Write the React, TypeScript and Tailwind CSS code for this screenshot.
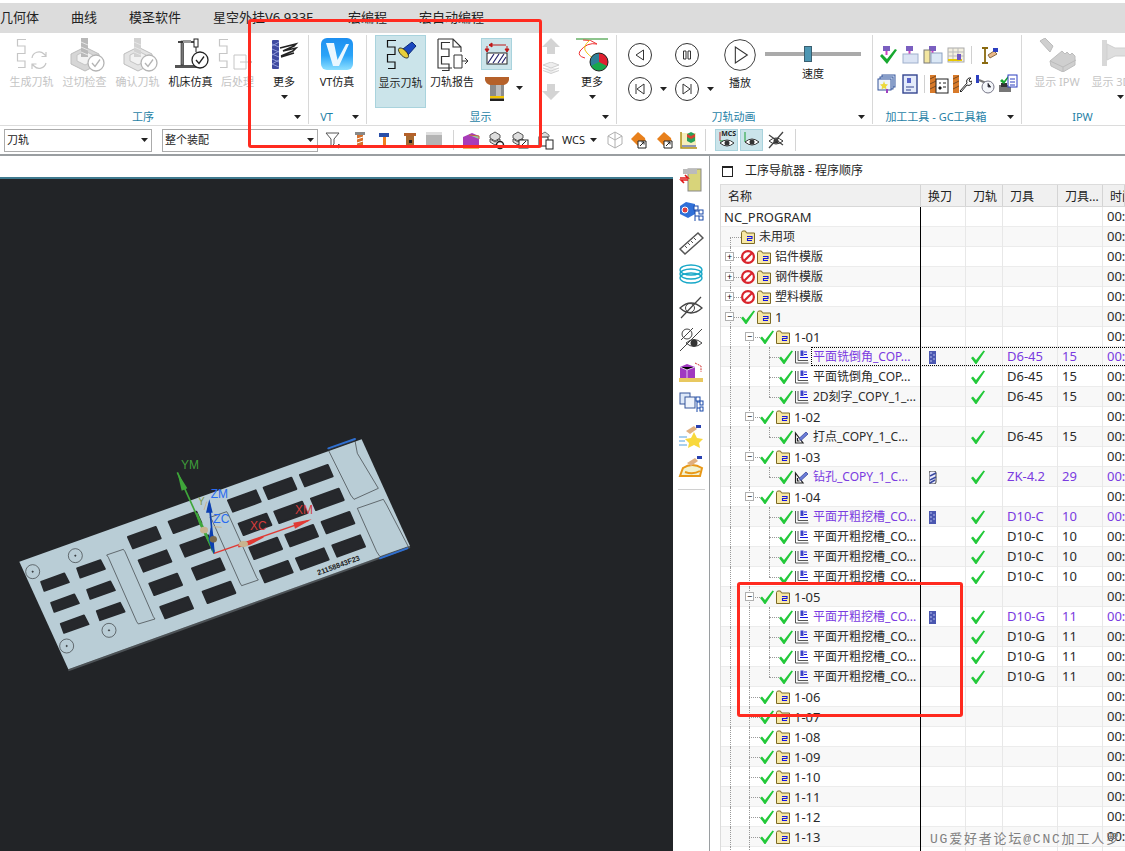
import React from 'react'

const Caret = ({ className = '' }: { className?: string }) => (
  <svg width="7" height="4" viewBox="0 0 7 4" className={className}>
    <polygon points="0,0 7,0 3.5,4" fill="#222" />
  </svg>
)

const Zig = ({ c = '#222', x = 0, y = 0 }: { c?: string; x?: number; y?: number }) => (
  <path
    transform={`translate(${x} ${y})`}
    d="M9 .5H.5V7H8V14.5H.5V22H8V28.5H1"
    fill="none"
    stroke={c}
    strokeWidth="1.2"
  />
)

const CheckBadge = ({ cx, cy, r = 8, c = '#222', bg = '#fff' }: { cx: number; cy: number; r?: number; c?: string; bg?: string }) => (
  <g>
    <circle cx={cx} cy={cy} r={r} fill={bg} stroke={c} strokeWidth="1.3" />
    <path d={`M${cx - 4} ${cy} l3 3.5 l5 -7`} fill="none" stroke={c} strokeWidth="1.3" />
  </g>
)

const Box = ({ children, w = 44, h = 34 }: { children: React.ReactNode; w?: number; h?: number }) => (
  <svg width={w} height={h} viewBox={`0 0 ${w} ${h}`} className="block">
    {children}
  </svg>
)

const GenIcon = () => (
  <Box>
    <Zig c="#c6c6c6" x={7} y={1} />
    <path d="M22 20a7 7 0 0 1 12-4l2 2M36 14v4.500h-4.500M36 25a7 7 0 0 1-12 3l-2-2M22 31v-5h4.500" fill="none" stroke="#c6c6c6" strokeWidth="1.2" />
  </Box>
)

const BlockIcon = ({ light }: { light?: boolean }) => (
  <Box>
    <path d="M8 16 22 9l14 7v10l-14 7-14-7z" fill={light ? '#e4e4e4' : '#d6d6d6'} stroke="#bdbdbd" />
    <path d="M14 17 22 13l8 4v6l-8 4-8-4z" fill="#f2f2f2" stroke="#c4c4c4" />
    <rect x="18" y="0" width="7" height="19" fill={light ? '#d2d2d2' : '#b9b9b9'} />
    <path d="M18 4l7 3M18 9l7 3M18 14l7 3" stroke="#e6e6e6" />
    <CheckBadge cx={33} cy={25} c="#b4b4b4" />
  </Box>
)

const MachineIcon = () => (
  <Box>
    <rect x="6" y="27" width="24" height="3" fill="#555" />
    <rect x="12" y="3" width="2.500" height="24" fill="#777" stroke="#222" strokeWidth=".6" />
    <path d="M9 4h20" stroke="#333" strokeWidth="1.800" />
    <rect x="14" y="2" width="8" height="3" fill="#999" />
    <rect x="25" y="1" width="4" height="8" fill="#fff" stroke="#222" />
    <path d="M27 9v5" stroke="#222" />
    <CheckBadge cx={31} cy={22} />
  </Box>
)

const PostIcon = () => (
  <Box>
    <Zig c="#c6c6c6" x={3} y={1} />
    <path d="M18 17h12v14H18z" fill="none" stroke="#c6c6c6" />
    <path d="M24 24h12m-3-3 3 3-3 3" fill="none" stroke="#c6c6c6" />
  </Box>
)

const MoreIcon = () => (
  <Box w={30}>
    <rect x="3" y="2" width="7" height="29" rx="1" fill="#3f4aa0" />
    <path d="M3 6l7 3M3 11l7 3M3 16l7 3M3 21l7 3M3 26l7 3M10 4 3 8M10 13 3 17M10 22 3 26" stroke="#8f9ad8" strokeWidth="1" />
    <path d="M11 10l16-4-2 2-11 5 13-3-3 3-12 5M12 19l13-4" fill="none" stroke="#222" strokeWidth="1.500" />
  </Box>
)

const VtLogo = () => (
  <Box w={32} h={32}>
    <defs>
      <linearGradient id="vt" x1="0" y1="0" x2="0" y2="1">
        <stop offset="0" stopColor="#1d8ff0" />
        <stop offset=".55" stopColor="#2aa4f8" />
        <stop offset="1" stopColor="#8ee0ff" />
      </linearGradient>
    </defs>
    <rect width="32" height="32" rx="6" fill="url(#vt)" />
    <path d="M5 5h8l3.500 17L25 6h3L18 28h-6z" fill="#eaf7ff" />
  </Box>
)

const ShowPathIcon = () => (
  <Box>
    <Zig c="#111" x={8} y={1} />
    <path d="M24 10l9-7 4 4-8 9z" fill="#1a48c0" stroke="#0c2a78" />
    <ellipse cx="24.500" cy="14" rx="3" ry="6.500" transform="rotate(-45 24.500 14)" fill="#e8cf3c" stroke="#222" strokeWidth=".8" />
  </Box>
)

const ReportIcon = () => (
  <Box>
    <path d="M8 1h15l8 8v5M8 1v29h14M23 1v8h8" fill="none" stroke="#333" strokeWidth="1.100" />
    <Zig c="#333" x={11} y={4} />
    <path d="M24 17h8v13h-8zM32 23h6m-3-3 3 3-3 3" fill="none" stroke="#333" />
  </Box>
)

const HatchBtn = () => (
  <div className="w-[31px] h-[32px] bg-[#cbe4ea] border border-[#a9d3dd] flex items-center justify-center">
    <svg width="26" height="26" viewBox="0 0 26 26">
      <rect x="3" y="12" width="20" height="11" fill="#fff" stroke="#222" />
      <path d="M4 22 10 13M9 22 15 13M14 22 20 13M18 22 22 16" stroke="#22226a" strokeWidth="1.200" />
      <path d="M5 4h17M5 4l3-2v4z" stroke="#c01818" fill="#c01818" />
      <path d="M3 5v5M23 5v5M1 8l2 3 2-3zM21 8l2 3 2-3z" stroke="#c01818" fill="#c01818" />
    </svg>
  </div>
)

const ToolIcon = () => (
  <svg width="24" height="24" viewBox="0 0 24 24" className="block">
    <path d="M0 0h24v3q-1 4-5 5H5Q1 7 0 3z" fill="#b5612a" />
    <rect x="5" y="8" width="14" height="11" fill="#8c8c8c" />
    <rect x="11" y="8" width="5" height="11" fill="#bdbdbd" />
    <rect x="5" y="19" width="14" height="2.500" fill="#f2c400" />
    <rect x="5" y="21.500" width="14" height="2.500" fill="#222" />
  </svg>
)

const ArrowBig = ({ down }: { down?: boolean }) => (
  <svg width="18" height="16" viewBox="0 0 18 16" className={down ? 'block rotate-180' : 'block'}>
    <polygon points="9,0 18,9 13,9 13,16 5,16 5,9 0,9" fill="#d4d4d4" />
  </svg>
)

const LayersIcon = () => (
  <svg width="18" height="14" viewBox="0 0 18 14" className="block">
    <path d="M9 0l8 3-8 3-8-3zM1 6l8 3 8-3M1 8.500l8 3 8-3" fill="#eee" stroke="#d0d0d0" />
  </svg>
)

const ColorMoreIcon = () => (
  <Box w={34}>
    <path d="M1 1h32" stroke="#1b8a1b" strokeWidth="1" />
    <path d="M8 2q8-1 14 4Q12 4 5 13q-3 5 5 7" fill="none" stroke="#e33" strokeWidth="1" />
    <path d="M15 2q-9 7-3 13t8 6" fill="none" stroke="#f1c515" strokeWidth="1" />
    <circle cx="24" cy="24" r="9" fill="#18a84a" />
    <path d="M24 24V15a9 9 0 0 1 8 13z" fill="#e02030" />
    <path d="M24 24V15a9 9 0 0 0-8 13z" fill="#2f7f96" />
    <circle cx="24" cy="24" r="9" fill="none" stroke="#222" />
  </Box>
)

const Circle = ({ kind, big }: { kind: string; big?: boolean }) => (
  <svg width={big ? 32 : 24} height={big ? 32 : 24} viewBox="0 0 24 24" className="block">
    <circle cx="12" cy="12" r="11.500" fill="#fff" stroke="#333" strokeWidth={big ? 0.7 : 1} />
    {kind === 'back' && <polygon points="15.500,7 15.500,17 8,12" fill="none" stroke="#333" />}
    {kind === 'pause' && <path d="M8.500 8h2.500v8H8.500zM13 8h2.500v8H13z" fill="none" stroke="#333" />}
    {kind === 'play' && <polygon points="8.500,6 8.500,18 17.500,12" fill="none" stroke="#333" strokeWidth=".8" />}
    {kind === 'start' && <path d="M8 7v10M16 7v10L9 12z" fill="none" stroke="#333" />}
    {kind === 'end' && <path d="M16 7v10M8 7v10l7-5z" fill="none" stroke="#333" />}
  </svg>
)

const Mini = ({ children, s = 20 }: { children: React.ReactNode; s?: number }) => (
  <svg width={s} height={s} viewBox="0 0 20 20" className="block shrink-0">
    {children}
  </svg>
)

const Cutter = () => (
  <>
    <rect x="6" y="1" width="7" height="5" fill="#7a5fc0" />
    <path d="M9.500 6v4" stroke="#d040c0" strokeWidth="2" />
  </>
)

const gcIcons: Record<string, React.ReactNode> = {
  check: (
    <>
      <Cutter />
      <path d="M3 11l2-2 5 5 8-10 2 1-10 14z" fill="#18a830" />
    </>
  ),
  plate: (
    <>
      <Cutter />
      <rect x="3" y="9" width="15" height="9" fill="#dbe4f4" stroke="#9fb0cc" />
    </>
  ),
  list: (
    <>
      <Cutter />
      <rect x="1" y="5" width="6" height="13" fill="#f3e6a0" stroke="#777" />
      <rect x="8" y="8" width="11" height="10" fill="#dbe8f6" stroke="#8ea2c0" />
    </>
  ),
  grid: (
    <>
      <rect x="2" y="3" width="16" height="14" fill="#f4f0e0" stroke="#aaa" />
      <path d="M2 7h16M2 11h16M7 3v14M12 3v14" stroke="#bbb" />
      <path d="M2 15h14" stroke="#e8c800" strokeWidth="2" />
      <path d="M13 9v6" stroke="#7058c0" strokeWidth="4" />
    </>
  ),
  hand: (
    <>
      <path d="M3 3h6M3 18h6M6 3v15" stroke="#8a6a10" strokeWidth="1.800" />
      <path d="M9 10l6-4 3 3-7 4z" fill="#e8b88a" stroke="#8a6a40" />
      <rect x="14" y="3" width="5" height="4" fill="#2c3fc0" />
    </>
  ),
  star: (
    <>
      <rect x="5" y="1" width="13" height="12" fill="#dce8f8" stroke="#34559a" />
      <rect x="3" y="3" width="13" height="12" fill="#dce8f8" stroke="#34559a" />
      <rect x="1" y="5" width="13" height="11" fill="#eef3fb" stroke="#34559a" />
      <path d="M7 7l1 3 3 .500-2 2 .500 3L7 14l-2.500 1.500.500-3-2-2 3-.500z" fill="#ecd83c" />
      <path d="M10 15v4" stroke="#a040c0" strokeWidth="2" />
    </>
  ),
  doc: (
    <>
      <rect x="3" y="1" width="14" height="18" fill="#e4ebfa" stroke="#34458f" strokeWidth="1.400" />
      <path d="M7 4h4v5H7z" fill="#5a64c8" />
      <path d="M6 13h8M6 16h5" stroke="#34458f" />
    </>
  ),
  drillDoc: (
    <>
      <rect x="1" y="1" width="6" height="18" fill="#d87a2a" />
      <path d="M1 5l6-3M1 10l6-3M1 15l6-3" stroke="#7a4a20" />
      <rect x="7" y="5" width="12" height="14" fill="#fff" stroke="#222" />
      <path d="M10 9h2M14 9h3M10 13h2v2h-2zM14 13h3" stroke="#222" />
    </>
  ),
  drillWrench: (
    <>
      <rect x="1" y="1" width="6" height="18" fill="#d87a2a" />
      <path d="M1 5l6-3M1 10l6-3M1 15l6-3" stroke="#7a4a20" />
      <path d="M8 17l7-8a3.500 3.500 0 0 1 4-5l-2 2 1 2 2-1a3.500 3.500 0 0 1-5 4l-6 7z" fill="#fff" stroke="#222" />
    </>
  ),
  clock: (
    <>
      <rect x="1" y="1" width="3" height="8" fill="#2c3fc0" />
      <path d="M4 6l7 3" stroke="#777" strokeWidth="2" />
      <circle cx="13" cy="13" r="6" fill="#f4f6fa" stroke="#778" />
      <path d="M13 9v4h3" stroke="#556" />
    </>
  ),
  report: (
    <>
      <rect x="1" y="11" width="12" height="7" fill="#777" />
      <rect x="3" y="9" width="6" height="4" fill="#333" />
      <path d="M2 7l2-2 2 2 4-5 1 1-5 7z" fill="#18a830" />
      <rect x="10" y="1" width="9" height="12" fill="#fff" stroke="#2c3fc0" />
      <path d="M12 5h5M12 8h5M12 11h5" stroke="#2c3fc0" />
    </>
  ),
}

const IpwIcon = () => (
  <Box>
    <path d="M5 3l5-3 8 8-3 6z" fill="#cfcfcf" stroke="#bbb" />
    <path d="M15 23 27 13l3 3 2-2 3 3 2-2 3 3v9L28 34 16 28z" fill="#cfcfcf" stroke="#bdbdbd" />
    <path d="M15 23l13 6 13-7M28 29v5" stroke="#bbb" fill="none" />
  </Box>
)

const ThreeDIcon = () => (
  <Box w={30}>
    <path d="M6 2h5v26H6z" fill="#d8d8d8" />
    <path d="M11 6l8 4h11v8H19l-8 4z" fill="#dedede" stroke="#cfcfcf" />
  </Box>
)

const RibbonBtn = ({
  w,
  icon,
  label,
  off,
  caret,
  on,
  caretCls = '',
}: {
  w: string
  icon: React.ReactNode
  label: string
  off?: boolean
  caret?: boolean
  on?: boolean
  caretCls?: string
}) => (
  <div className={`${w} h-[73px] shrink-0 flex flex-col items-center pt-[3px] ${on ? 'bg-[#cbe4ea] border border-[#a9d3dd]' : ''}`}>
    <div className="h-[34px] flex justify-center">{icon}</div>
    <div className={`mt-[3px] leading-[14px] text-[11px] whitespace-nowrap ${off ? 'text-[#c4c4c4]' : 'text-[#222]'}`}>{label}</div>
    {caret && <Caret className={`mt-[6px] ${caretCls}`} />}
  </div>
)

const RibbonGroup = ({
  w,
  label,
  caret = true,
  children,
  body = '',
}: {
  w: string
  label: string
  caret?: boolean
  children: React.ReactNode
  body?: string
}) => (
  <div className={`${w} shrink-0 mt-[2px] h-[89px] flex flex-col border-r border-[#d8d8d8]`}>
    <div className={`h-[73px] flex ${body}`}>{children}</div>
    <div className="h-[14px] mt-[2px] flex items-center">
      <div className="flex-1 text-center text-[11px] leading-[14px] text-[#1f7fa6] whitespace-nowrap">{label}</div>
      {caret && (
        <div className="w-[22px] flex justify-center">
          <Caret />
        </div>
      )}
    </div>
  </div>
)

const Combo = ({ w, label }: { w: string; label: string }) => (
  <div className={`${w} h-[23px] shrink-0 border border-[#ababab] bg-white flex items-center justify-between pl-[2px] pr-[3px] text-[11px] text-[#222]`}>
    <span>{label}</span>
    <Caret />
  </div>
)

const barIcons: Record<string, React.ReactNode> = {
  funnel: <path d="M2 3h13l-5 6v5l-3 3V9zM12 17l3-3 1 3-2 1" fill="#fff" stroke="#555" />,
  mill: (
    <>
      <rect x="5" y="2" width="10" height="3" fill="#888" />
      <rect x="7" y="5" width="6" height="13" fill="#d8702a" />
      <path d="M7 9l6-2M7 13l6-2" stroke="#fff" />
    </>
  ),
  end: (
    <>
      <rect x="5" y="3" width="10" height="4" fill="#2a4fa8" />
      <rect x="9" y="7" width="3" height="11" fill="#f08020" />
    </>
  ),
  holder: (
    <>
      <rect x="4" y="3" width="12" height="3" fill="#b5612a" />
      <rect x="6" y="6" width="8" height="12" fill="#a86a30" />
      <rect x="9" y="10" width="3" height="3" fill="#222" />
    </>
  ),
  win: (
    <>
      <rect x="2" y="2" width="16" height="16" fill="#b4b4b4" />
      <rect x="2" y="2" width="16" height="3" fill="#dedede" />
    </>
  ),
  cube: (
    <>
      <path d="M2 7l9-4 7 3v10l-8 3-8-3z" fill="#a83cb8" />
      <path d="M8 5l10 1v3" fill="#9ad0a0" stroke="#c06040" />
      <path d="M2 16h16v3H2z" fill="#e8b860" />
    </>
  ),
  gears: (
    <>
      <path d="M4 5l5-3 5 3v3l-5 3-5-3zM4 9l5 3 5-3v3l-5 3-5-3z" fill="#ddd" stroke="#555" />
      <circle cx="14" cy="15" r="3.500" fill="#fff" stroke="#222" strokeWidth="1.500" />
    </>
  ),
  gearsBox: (
    <>
      <path d="M3 5l5-3 5 3v3l-5 3-5-3zM3 9l5 3 5-3v3l-5 3-5-3z" fill="#ddd" stroke="#555" />
      <rect x="9" y="10" width="9" height="8" fill="#fff" stroke="#222" />
      <path d="M11 16l5-5" stroke="#222" />
    </>
  ),
  copy: (
    <>
      <path d="M4 5l5-3 4 3v2" fill="#ddd" stroke="#777" />
      <rect x="3" y="7" width="9" height="9" fill="#fff" stroke="#222" />
      <rect x="10" y="10" width="7" height="9" fill="#fff" stroke="#222" />
    </>
  ),
  wire: (
    <path d="M10 2l7 4v8l-7 4-7-4V6zM3 6l7 4 7-4M10 10v8M10 2v8" fill="none" stroke="#b0b0b0" />
  ),
  orange: (
    <>
      <path d="M2 9 9 2l7 6 1 6-6 4z" fill="#e8801c" />
      <path d="M9 18V11h8v7z" fill="#fff" stroke="#222" />
      <path d="M11 16l4-4m-2.500 0H15v2.500" stroke="#222" fill="none" />
    </>
  ),
  chart: (
    <>
      <path d="M2 2v16h16" fill="#f6eebc" stroke="#b09018" strokeWidth="1.500" />
      <rect x="3" y="3" width="14" height="13" fill="#f6eebc" />
      <path d="M8 4l4-2 4 2v7l-4 2-4-2z" fill="#28a058" />
      <path d="M8 4l4 2 4-2v3l-4 2-4-2z" fill="#d84030" />
      <path d="M3 16h14" stroke="#2840b0" />
    </>
  ),
  mcs: (
    <>
      <path d="M3 2v9" stroke="#c03030" />
      <path d="M3 11h4" stroke="#18a030" />
      <path d="M3 13q7-6 14 0-7 6-14 0z" fill="#fff" stroke="#333" />
      <circle cx="10" cy="13" r="2.500" fill="#333" />
    </>
  ),
  eye: (
    <>
      <path d="M3 2v10" stroke="#18a030" />
      <path d="M3 12l4 2" stroke="#c03030" />
      <path d="M3 12q7-6 14 0-7 6-14 0z" fill="#fff" stroke="#333" />
      <circle cx="10" cy="12" r="2.500" fill="#333" />
    </>
  ),
  hide: (
    <>
      <path d="M3 11q7-6 14 0-7 6-14 0z" fill="#fff" stroke="#333" />
      <circle cx="10" cy="11" r="2.500" fill="#333" />
      <path d="M3 18 17 2M3 5l14 10" stroke="#444" strokeWidth="1.300" />
    </>
  ),
}

const BarIcon = ({ name, cls }: { name: string; cls: string }) => (
  <div className={`${cls} w-[20px] h-[20px] shrink-0`}>
    <Mini>{barIcons[name]}</Mini>
  </div>
)

const sideIcons: React.ReactNode[] = [
  <>
    <rect x="10" y="3" width="13" height="22" fill="#d8d47a" stroke="#888" />
    <rect x="5" y="3" width="14" height="5" fill="#bbb" />
    <path d="M2 12h8l-3-3M10 14H3l3 3" fill="none" stroke="#e01818" strokeWidth="1.600" />
  </>,
  <>
    <path d="M2 8l6-4 9 2v10l-7 4-8-4z" fill="#3070d8" />
    <circle cx="7" cy="12" r="3" fill="#e04040" stroke="#fff" />
    <path d="M17 9v14M17 13h4M17 18h4" stroke="#1848a8" />
    <rect x="16" y="8" width="4" height="4" fill="#fff" stroke="#1848a8" />
    <rect x="21" y="12" width="4" height="4" fill="#fff" stroke="#1848a8" />
    <rect x="21" y="18" width="4" height="4" fill="#fff" stroke="#1848a8" />
  </>,
  <>
    <path d="M2 19 20 3l5 5L7 24z" fill="#fff" stroke="#555" strokeWidth="1.500" />
    <path d="M7 16l2 2M10 13l2 2M13 11l2 2M16 8l2 2" stroke="#555" />
  </>,
  <>
    <ellipse cx="13" cy="8" rx="11" ry="5" fill="none" stroke="#18a8c8" strokeWidth="1.300" />
    <ellipse cx="13" cy="12" rx="11" ry="5" fill="none" stroke="#18a8c8" strokeWidth="1.300" />
    <ellipse cx="13" cy="16" rx="11" ry="5" fill="none" stroke="#18a8c8" strokeWidth="1.300" />
  </>,
  <>
    <path d="M2 14q11-10 22 0-11 10-22 0z" fill="none" stroke="#444" strokeWidth="1.300" />
    <circle cx="12" cy="14" r="4.500" fill="none" stroke="#444" />
    <path d="M3 24 23 3" stroke="#444" strokeWidth="1.200" />
  </>,
  <>
    <circle cx="9" cy="8" r="5" fill="none" stroke="#444" />
    <path d="M3 14 15 2" stroke="#444" />
    <path d="M8 17q8-7 16 0-8 7-16 0z" fill="#fff" stroke="#444" />
    <circle cx="16" cy="17" r="3.500" fill="#333" />
    <path d="M2 25 24 3" stroke="#444" />
  </>,
  <>
    <path d="M2 9l7-3 8 3v11H2z" fill="#a038c0" />
    <path d="M2 9l7 3 8-3M9 12v8" stroke="#e4c4f0" />
    <path d="M17 5l6 3v6" fill="none" stroke="#d03030" strokeDasharray="2 1" />
    <rect x="1" y="20" width="24" height="4" fill="#e8c860" />
  </>,
  <>
    <rect x="2" y="3" width="10" height="11" fill="#dde8f8" stroke="#34559a" />
    <rect x="7" y="7" width="10" height="11" fill="#eef3fb" stroke="#34559a" />
    <path d="M19 8v14M19 12h3M19 18h3" stroke="#1848a8" />
    <rect x="18" y="7" width="4" height="4" fill="#fff" stroke="#1848a8" />
    <rect x="22" y="11" width="3" height="4" fill="#fff" stroke="#1848a8" />
    <rect x="22" y="17" width="3" height="4" fill="#fff" stroke="#1848a8" />
  </>,
  <>
    <path d="M16 10l3 6 6 1-4 4 1 5-6-3-6 3 1-5-4-4 6-1z" fill="#f8d83c" />
    <path d="M8 9l8-5 3 3-7 5z" fill="#e0b080" />
    <path d="M18 3h5v3h-5z" fill="#2840b0" />
    <path d="M1 15h8M1 19h6M1 23h8" stroke="#50a0e0" />
  </>,
  <>
    <path d="M2 22 22 22 24 14Q14 8 5 14z" fill="#f2f2d0" stroke="#e89818" strokeWidth="2" />
    <path d="M7 18q8 3 15-1" fill="none" stroke="#e89818" strokeWidth="2" />
    <path d="M9 9l8-5 3 3-7 5z" fill="#e0b080" />
    <path d="M19 2h5v3h-5z" fill="#2840b0" />
  </>,
]

const Check = () => (
  <svg width="14" height="14" viewBox="0 0 14 14" className="block shrink-0">
    <polygon points="0,8 2,6.500 5,10 12.500,.5 14,1.200 5.500,14 4.500,14" fill="#23c93a" />
  </svg>
)

const Stop = () => (
  <svg width="14" height="14" viewBox="0 0 14 14" className="block shrink-0">
    <circle cx="7" cy="7" r="5.900" fill="#fff" stroke="#d9242c" strokeWidth="2.200" />
    <path d="M3 11 11 3" stroke="#d9242c" strokeWidth="2.200" />
  </svg>
)

const Folder = () => (
  <svg width="14" height="14" viewBox="0 0 14 14" className="block shrink-0">
    <path d="M.5 13.500V2.500l1-1.500h3l1 2h8v10.500z" fill="#f7e8a6" stroke="#7d6a24" />
    <path d="M6 6.500h5v2H6.500v2H11" fill="none" stroke="#1414e0" strokeWidth="1.100" />
  </svg>
)

const OpIcon = () => (
  <svg width="15" height="14" viewBox="0 0 15 14" className="block shrink-0">
    <path d="M1.500 1v12h13M4 1v9.500h10" fill="none" stroke="#555" />
    <rect x="6.500" y=".5" width="3" height="5.500" fill="#3c42c8" />
    <path d="M10 2h3M10 4.500h3M6 7.500h8" stroke="#1616e0" />
  </svg>
)

const PointIcon = () => (
  <svg width="15" height="14" viewBox="0 0 15 14" className="block shrink-0">
    <path d="M1.500 3 9 13H1.500zM3.500 8v3h2" fill="none" stroke="#222" strokeWidth="1.200" />
    <path d="M5 8.500 12 2l2 2-7 6.500z" fill="#6a7cd8" stroke="#2c3a90" strokeWidth=".7" />
  </svg>
)

const Tool = ({ drill }: { drill?: boolean }) => (
  <svg width="8" height="13" viewBox="0 0 8 13" className="block">
    <rect x="0" y="0" width="7" height="13" rx={drill ? 2 : 0} fill={drill ? '#eef' : '#4b57b0'} stroke={drill ? '#444' : 'none'} />
    {drill ? (
      <path d="M1 5l6-3M1 9l6-3M1 12l5-3" stroke="#3a4aa0" strokeWidth="1.500" />
    ) : (
      <path d="M1 2h2M4 4h2M1 6h2M4 8h2M1 10h2" stroke="#b5bcec" />
    )}
  </svg>
)

type Row = {
  name: string
  lv: 'root' | 'unused' | 'top' | 'group' | 'op' | 'blank'
  mark?: 'stop' | 'check'
  box?: '+' | '-'
  point?: boolean
  tool?: string
  num?: string
  hot?: boolean
  icon?: 'mill' | 'drill'
  last?: boolean
  focus?: boolean
}

const op = (name: string, tool: string, num: string, extra: Partial<Row> = {}): Row => ({ name, tool, num, lv: 'op', mark: 'check', ...extra })
const grp = (name: string, box?: '+' | '-'): Row => ({ name, lv: 'group', mark: 'check', box })
const mill = '平面开粗挖槽_CO...'

const rows: Row[] = [
  { name: 'NC_PROGRAM', lv: 'root' },
  { name: '未用项', lv: 'unused' },
  { name: '铝件模版', lv: 'top', mark: 'stop', box: '+' },
  { name: '钢件模版', lv: 'top', mark: 'stop', box: '+' },
  { name: '塑料模版', lv: 'top', mark: 'stop', box: '+' },
  { name: '1', lv: 'top', mark: 'check', box: '-' },
  grp('1-01', '-'),
  op('平面铣倒角_COP...', 'D6-45', '15', { hot: true, icon: 'mill', focus: true }),
  op('平面铣倒角_COP...', 'D6-45', '15'),
  op('2D刻字_COPY_1_...', 'D6-45', '15', { last: true }),
  grp('1-02', '-'),
  op('打点_COPY_1_C...', 'D6-45', '15', { point: true, last: true }),
  grp('1-03', '-'),
  op('钻孔_COPY_1_C...', 'ZK-4.2', '29', { point: true, hot: true, icon: 'drill', last: true }),
  grp('1-04', '-'),
  op(mill, 'D10-C', '10', { hot: true, icon: 'mill' }),
  op(mill, 'D10-C', '10'),
  op(mill, 'D10-C', '10'),
  op(mill, 'D10-C', '10', { last: true }),
  grp('1-05', '-'),
  op(mill, 'D10-G', '11', { hot: true, icon: 'mill' }),
  op(mill, 'D10-G', '11'),
  op(mill, 'D10-G', '11'),
  op(mill, 'D10-G', '11', { last: true }),
  ...['1-06', '1-07', '1-08', '1-09', '1-10', '1-11', '1-12', '1-13'].map((n) => grp(n)),
  { name: '', lv: 'blank' },
]

const dot = 'absolute border-[#9a9a9a] border-dotted'

const NavRow = ({ row, i }: { row: Row; i: number }) => {
  const txt = row.hot ? 'text-[#7a3be0]' : 'text-[#2a2a2a]'
  const pad = { root: 'pl-[3px]', unused: 'pl-[20px]', top: 'pl-[20px]', group: 'pl-[39px]', op: 'pl-[58px]', blank: '' }[row.lv]
  const cell = 'border-r border-[#e8e8e8] h-full flex items-center pl-[4px]'
  const latin = /^[\x00-\x7f]*$/.test(row.name)
  return (
    <div className={`relative h-[20px] grid grid-cols-[200px_45px_37px_55px_45px_1fr] border-b border-[#ececec] ${i % 2 ? 'bg-[#f8f8f8]' : 'bg-white'}`}>
      <div className={`relative h-full border-r border-black flex items-center ${pad}`}>
        {i > 0 && <span className={`${dot} border-l left-[9px] bottom-0 ${i === 1 ? 'h-[10px]' : 'top-0'}`} />}
        {i > 6 && <span className={`${dot} border-l left-[28px] top-0 bottom-0`} />}
        {i === 6 && <span className={`${dot} border-l left-[28px] h-[10px] bottom-0`} />}
        {row.lv === 'op' && <span className={`${dot} border-l left-[48px] top-0 ${row.last ? 'h-[10px]' : 'bottom-0'}`} />}
        {(row.lv === 'top' || row.lv === 'unused') && <span className={`${dot} border-t left-[9px] w-[11px] top-[10px]`} />}
        {row.lv === 'group' && <span className={`${dot} border-t left-[28px] w-[11px] top-[10px]`} />}
        {row.lv === 'op' && <span className={`${dot} border-t left-[48px] w-[10px] top-[10px]`} />}
        {row.box && (
          <span className={`absolute ${row.lv === 'top' ? 'left-[4px]' : 'left-[24px]'} top-[5px] w-[9px] h-[9px] bg-white border border-[#b0b0b0] flex items-center justify-center text-[9px] leading-none text-black`}>
            {row.box === '+' ? '+' : '−'}
          </span>
        )}
        <div className="relative flex items-center">
          {row.mark === 'stop' && <Stop />}
          {row.mark === 'check' && <Check />}
          {row.lv === 'op' ? (
            <span className="ml-[1px]">{row.point ? <PointIcon /> : <OpIcon />}</span>
          ) : row.mark ? (
            <span className="ml-[2px]">
              <Folder />
            </span>
          ) : row.lv === 'unused' ? (
            <Folder />
          ) : null}
          <span className={`${row.lv === 'root' ? '' : 'ml-[4px]'} whitespace-nowrap ${latin ? 'text-[13px]' : 'text-[12px]'} leading-[20px] ${txt}`}>{row.name}</span>
        </div>
      </div>
      <div className="border-r border-[#e8e8e8] h-full flex items-center pl-[8px]">{row.icon && <Tool drill={row.icon === 'drill'} />}</div>
      <div className={`${cell} pl-[5px]`}>{row.tool && <Check />}</div>
      <div className={`${cell} text-[13px] ${txt}`}>{row.tool}</div>
      <div className={`${cell} text-[13px] ${txt}`}>{row.num}</div>
      <div className={`h-full flex items-center pl-[4px] text-[13px] whitespace-nowrap overflow-hidden ${txt}`}>{row.lv !== 'blank' && '00:00:00'}</div>
      {row.focus && <div className="absolute left-[90px] right-0 top-0 bottom-0 border-y border-l border-dotted border-black" />}
    </div>
  )
}

const Header = ({ t, cls }: { t: string; cls?: string }) => (
  <div className={`h-full flex items-center pl-[7px] pt-[2px] border-r border-[#d4d4d4] overflow-hidden whitespace-nowrap ${cls || ''}`}>{t}</div>
)

const pockets: [number, number][] = [
  [433, 353], [465, 423], [497, 493], [530, 563],
  [555, 307], [590, 378], [625, 447], [657, 517],
  [733, 243], [765, 313], [797, 385], [829, 455],
  [840, 205], [872, 277], [905, 347], [937, 417],
  [949, 167], [982, 238], [1014, 308], [1046, 378],
]
const smallPockets: [number, number][] = [
  [165, 487], [273, 447], [195, 550], [303, 511], [224, 613], [332, 575],
]
const holes: [number, number, number][] = [
  [98, 455, 21], [226, 407, 21], [327, 631, 21], [200, 678, 21],
]

const Viewport = () => (
  <svg viewBox="0 179 673 672" className="block w-full h-full">
    <g transform="translate(0 420) scale(.33333)">
      <path d="M205 751 1230 381" stroke="#4d5256" strokeWidth="6" fill="none" />
      <polygon points="58,425 1085,58 1230,378 205,748" fill="#b9cdd6" />
      {pockets.map(([x, y]) => (
        <polygon key={`${x}-${y}`} points={`${x - 49},${y - 2} ${x + 34},${y - 32} ${x + 49},${y + 2} ${x - 34},${y + 32}`} fill="#26282c" stroke="#26282c" strokeWidth="6" strokeLinejoin="round" />
      ))}
      {smallPockets.map(([x, y]) => (
        <polygon key={`${x}-${y}`} points={`${x - 42},${y - 2} ${x + 28},${y - 27} ${x + 42},${y} ${x - 32},${y + 26}`} fill="#26282c" stroke="#26282c" strokeWidth="5" strokeLinejoin="round" />
      ))}
      <g fill="none" stroke="#33373a" strokeWidth="2">
        <path d="M320 405 370 388 375 395 460 590 465 597 415 612 410 605 325 412z" />
        <path d="M630 292 680 275 685 283 770 473 775 480 725 497 720 489 636 300z" />
        <path d="M985 90 1065 62 1072 100 1135 205 1062 238 1052 225z" />
        <path d="M1072 265 1150 238 1160 255 1225 380 1140 410 1130 395z" />
        {holes.map(([x, y, r]) => (
          <g key={x}>
            <circle cx={x} cy={y} r={r} />
            <circle cx={x} cy={y} r="2" fill="#33373a" />
          </g>
        ))}
      </g>
      <path d="M985 85 1065 57" stroke="#2f6fd0" strokeWidth="6" fill="none" strokeLinecap="round" />
      <path d="M1140 415 1222 385" stroke="#2f6fd0" strokeWidth="6" fill="none" strokeLinecap="round" />
      <text x="955" y="466" fontSize="22" fill="#222" transform="rotate(-20 955 466)" fontFamily="Liberation Sans, sans-serif" fontWeight="bold">
        21158843F23
      </text>
      <path d="M642 400 532 157" stroke="#3fa63a" strokeWidth="5" />
      <polygon points="532,157 562,205 545,212" fill="#3fa63a" />
      <polygon points="590,280 642,395 600,310" fill="#3fa63a" stroke="#3fa63a" strokeWidth="6" />
      <path d="M642 400 628 250" stroke="#0b3fb0" strokeWidth="5" />
      <polygon points="628,238 638,278 618,278" fill="#0b3fb0" />
      <polygon points="632,322 644,358 636,395 626,358" fill="#0b3fb0" />
      <path d="M642 400 925 302" stroke="#e03a34" strokeWidth="4" />
      <polygon points="935,298 880,308 885,326" fill="#e03a34" />
      <polygon points="715,380 790,350 750,372" fill="#e03a34" stroke="#e03a34" strokeWidth="5" />
      <ellipse cx="612" cy="330" rx="12" ry="10" fill="#c9b48f" />
      <ellipse cx="640" cy="358" rx="11" ry="10" fill="#7a6a4c" />
      <ellipse cx="730" cy="372" rx="14" ry="9" fill="#c9b48f" />
      <path d="M612 270 620 245M640 320 665 322" stroke="#c9b48f" strokeWidth="3" />
      <g fontFamily="Liberation Sans, sans-serif" fontSize="36">
        <text x="543" y="147" fill="#3f9c3a">YM</text>
        <text x="632" y="235" fill="#2a6cf0">ZM</text>
        <text x="640" y="310" fill="#2a6cf0">ZC</text>
        <text x="885" y="283" fill="#d63c3c">XM</text>
        <text x="750" y="330" fill="#d63c3c">XC</text>
        <text x="594" y="255" fill="#7f9a4c" fontSize="30">Y</text>
      </g>
    </g>
  </svg>
)

export default function App() {
  return (
    <div className="relative w-[1125px] h-[851px] overflow-hidden bg-white font-['Noto_Sans','Noto_Sans_CJK_SC',sans-serif] text-[#222]">
      <div className="mt-[3px] h-[30px] bg-[#dcdcdc] flex items-center gap-[32px] text-[13px] whitespace-nowrap">
        <span>几何体</span>
        <span>曲线</span>
        <span>模圣软件</span>
        <span className="w-[103px]">星空外挂V6.933F</span>
        <span>宏编程</span>
        <span>宏自动编程</span>
      </div>

      <div className="h-[93px] flex border-b border-[#dcdcdc]">
        <RibbonGroup w="w-[309px]" label="工序" body="pl-[5px]">
          <RibbonBtn w="w-[53px]" icon={<GenIcon />} label="生成刀轨" off />
          <RibbonBtn w="w-[53px]" icon={<BlockIcon />} label="过切检查" off />
          <RibbonBtn w="w-[53px]" icon={<BlockIcon light />} label="确认刀轨" off />
          <RibbonBtn w="w-[53px]" icon={<MachineIcon />} label="机床仿真" />
          <RibbonBtn w="w-[41px]" icon={<PostIcon />} label="后处理" off />
          <RibbonBtn w="w-[52px]" icon={<MoreIcon />} label="更多" caret />
        </RibbonGroup>
        <RibbonGroup w="w-[58px]" label="VT" body="justify-center pr-[1px]">
          <RibbonBtn w="w-[50px]" icon={<VtLogo />} label="VT仿真" />
        </RibbonGroup>
        <RibbonGroup w="w-[250px]" label="显示" body="pl-[8px]">
          <RibbonBtn w="w-[51px]" icon={<ShowPathIcon />} label="显示刀轨" on />
          <RibbonBtn w="w-[52px]" icon={<ReportIcon />} label="刀轨报告" />
          <div className="ml-[3px] w-[31px] shrink-0 pt-[3px] flex flex-col items-center">
            <HatchBtn />
            <div className="mt-[7px]">
              <ToolIcon />
            </div>
          </div>
          <div className="w-[30px] shrink-0 pl-[4px] pt-[51px]">
            <Caret />
          </div>
          <div className="w-[18px] shrink-0 flex flex-col">
            <div className="pt-[3px]">
              <ArrowBig />
            </div>
            <div className="mt-[8px]">
              <LayersIcon />
            </div>
            <div className="mt-[8px]">
              <ArrowBig down />
            </div>
          </div>
          <RibbonBtn w="w-[64px]" icon={<ColorMoreIcon />} label="更多" caret />
        </RibbonGroup>
        <RibbonGroup w="w-[256px]" label="刀轨动画" body="pl-[11px]">
          <div className="grid grid-cols-[24px_23px_24px_23px] gap-y-[10px] pt-[8px] h-fit items-center">
            <Circle kind="back" />
            <span />
            <Circle kind="pause" />
            <span />
            <Circle kind="start" />
            <Caret className="ml-[8px]" />
            <Circle kind="end" />
            <Caret className="ml-[8px]" />
          </div>
          <div className="w-[36px] flex flex-col items-center pt-[4px]">
            <Circle kind="play" big />
            <div className="mt-[5px] text-[11px] leading-[14px]">播放</div>
          </div>
          <div className="ml-[7px] w-[96px] flex flex-col items-center pt-[11px]">
            <div className="relative w-full h-[16px] flex items-center">
              <div className="w-full h-[4px] bg-[#aaaaaa]" />
              <div className="absolute left-[39px] top-0 w-[8px] h-[16px] bg-[#4e97b3] border border-[#3a5f70]" />
            </div>
            <div className="mt-[5px] text-[11px] leading-[14px]">速度</div>
          </div>
        </RibbonGroup>
        <RibbonGroup w="w-[149px]" label="加工工具 - GC工具箱" body="pl-[4px]">
          <div className="flex flex-col pt-[10px] gap-[9px]">
            <div className="flex items-center gap-[3px]">
              <Mini>{gcIcons.check}</Mini>
              <Mini>{gcIcons.plate}</Mini>
              <Mini>{gcIcons.list}</Mini>
              <Mini>{gcIcons.grid}</Mini>
              <span className="mx-[2px] w-px h-[18px] bg-[#d0d0d0]" />
              <span className="ml-[2px]">
                <Mini>{gcIcons.hand}</Mini>
              </span>
            </div>
            <div className="flex items-center gap-[3px]">
              <Mini>{gcIcons.star}</Mini>
              <Mini>{gcIcons.doc}</Mini>
              <span className="w-px h-[18px] bg-[#d0d0d0] mx-px" />
              <Mini>{gcIcons.drillDoc}</Mini>
              <Mini>{gcIcons.drillWrench}</Mini>
              <Mini>{gcIcons.clock}</Mini>
              <Mini>{gcIcons.report}</Mini>
            </div>
          </div>
        </RibbonGroup>
        <RibbonGroup w="w-[122px]" label="IPW" caret={false} body="pl-[8px]">
          <RibbonBtn w="w-[54px]" icon={<IpwIcon />} label="显示 IPW" off />
          <RibbonBtn w="w-[54px]" icon={<ThreeDIcon />} label="显示 3D" off caret caretCls="ml-[18px]" />
        </RibbonGroup>
      </div>

      <div className="h-[30px] flex items-center pl-[4px] border-b-2 border-[#9a9ea1]">
        <Combo w="w-[148px]" label="刀轨" />
        <div className="ml-[10px]">
          <Combo w="w-[156px]" label="整个装配" />
        </div>
        <BarIcon name="funnel" cls="ml-[6px]" />
        <BarIcon name="mill" cls="ml-[6px]" />
        <BarIcon name="end" cls="ml-[4px]" />
        <BarIcon name="holder" cls="ml-[6px]" />
        <BarIcon name="win" cls="ml-[4px]" />
        <span className="ml-[9px] w-px h-[20px] bg-[#d4d4d4]" />
        <BarIcon name="cube" cls="ml-[7px]" />
        <BarIcon name="gears" cls="ml-[5px]" />
        <BarIcon name="gearsBox" cls="ml-[4px]" />
        <BarIcon name="copy" cls="ml-[6px]" />
        <span className="ml-[6px] text-[11px]">WCS</span>
        <Caret className="ml-[5px]" />
        <BarIcon name="wire" cls="ml-[8px]" />
        <BarIcon name="orange" cls="ml-[4px]" />
        <BarIcon name="orange" cls="ml-[6px]" />
        <BarIcon name="chart" cls="ml-[4px]" />
        <span className="ml-[6px] w-px h-[22px] bg-[#d4d4d4]" />
        <div className="ml-[9px] w-[23px] h-[22px] bg-[#cbe4ea] border border-[#a9d3dd] flex items-center justify-center relative">
          <span className="absolute top-[-1px] left-[5px] text-[7px] leading-[9px] font-bold">MCS</span>
          <Mini>{barIcons.mcs}</Mini>
        </div>
        <div className="ml-[2px] w-[23px] h-[22px] bg-[#cbe4ea] border border-[#a9d3dd] flex items-center justify-center">
          <Mini>{barIcons.eye}</Mini>
        </div>
        <BarIcon name="hide" cls="ml-[3px]" />
        <span className="ml-[9px] w-px h-[22px] bg-[#d4d4d4]" />
      </div>

      <div className="h-[695px] flex">
        <div className="w-[673px] shrink-0 flex flex-col">
          <div className="h-[21px] shrink-0 border-b-2 border-[#3f7a8f] box-content" />
          <div className="flex-1 min-h-0 bg-[#222427]">
            <Viewport />
          </div>
        </div>

        <div className="w-[37px] shrink-0 border-r border-[#9a9ea1] flex flex-col items-center pt-[10px] gap-[6px]">
          {sideIcons.map((ic, i) => (
            <svg key={i} width="26" height="26" viewBox="0 0 26 26" className="block shrink-0">
              {ic}
            </svg>
          ))}
          <div className="mt-[3px] w-[27px] h-px bg-[#d0d0d0]" />
        </div>

        <div className="flex-1 min-w-0">
          <div className="h-[28px] flex items-center pl-[12px] pt-[2px] text-[12px]">
            <span className="w-[11px] h-[11px] border border-[#222] border-t-2 box-border" />
            <span className="ml-[12px]">工序导航器 - 程序顺序</span>
          </div>
          <div className="ml-[10px] border-l border-t border-[#dcdcdc]">
            <div className="h-[22px] grid grid-cols-[200px_45px_37px_55px_45px_1fr] bg-[#f0f0f0] border-b border-[#d8d8d8] text-[12px]">
              <Header t="名称" cls="pl-[6px]" />
              <Header t="换刀" />
              <Header t="刀轨" />
              <Header t="刀具" />
              <Header t="刀具..." cls="pl-[5px]" />
              <Header t="时间" />
            </div>
            {rows.map((r, i) => (
              <NavRow key={i} row={r} i={i} />
            ))}
          </div>
        </div>
      </div>

      <div className="absolute left-[248px] top-[19px] w-[294px] h-[129px] border-[3px] border-[#ff2a1f] rounded-[3px]" />
      <div className="absolute left-[737px] top-[582px] w-[226px] h-[135px] border-[3px] border-[#ff2a1f] rounded-[3px]" />
      <div className="absolute left-[930px] top-[831px] text-[13px] leading-[18px] tracking-[1.8px] text-[#808080] whitespace-nowrap font-['Liberation_Mono','Noto_Sans_CJK_SC',monospace]">
        UG爱好者论坛@CNC加工人罗
      </div>
    </div>
  )
}
